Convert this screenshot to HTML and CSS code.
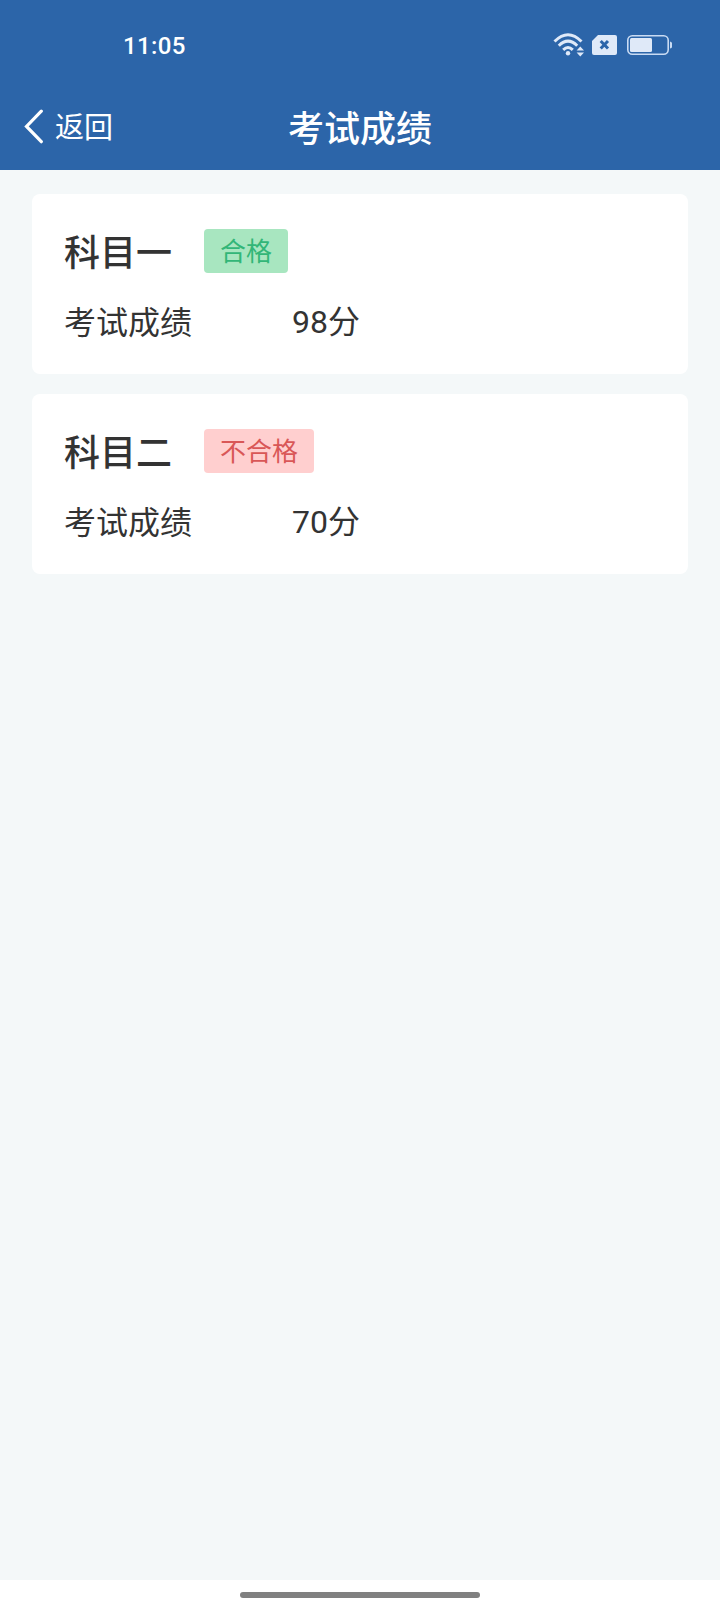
FILE: index.html
```html
<!DOCTYPE html>
<html lang="zh-CN">
<head>
<meta charset="utf-8">
<title>考试成绩</title>
<link rel="stylesheet" href="styles.css">
</head>
<body>
<header class="header">
  <div class="status">
    <span class="clock">11:05</span>
    <div class="status-icons">
      <svg width="32" height="26" viewBox="0 0 32 26" fill="none" stroke="#dfe9f8" stroke-width="3">
        <path d="M1.5 9.5Q15 -4 28.5 9.5M5.8 13.7Q15 4.6 24.2 13.7M10.2 17.8Q15 13.2 19.8 17.8"/>
        <circle cx="15" cy="21.3" r="2.2" fill="#dfe9f8" stroke="none"/>
        <path d="M27.3 14.5L31 18.5H23.6ZM27.3 24.5L31 20.5H23.6Z" fill="#dfe9f8" stroke="none"/>
      </svg>
      <svg class="sim" width="26" height="20" viewBox="0 0 26 20">
        <path d="M6 0H23Q25 0 25 2V18Q25 20 23 20H2Q0 20 0 18V6Z" fill="#dfe9f8"/>
        <path d="M8.7 6L16 13.5M16 6L8.7 13.5" stroke="#2c65a9" stroke-width="3"/>
      </svg>
      <svg class="battery" width="46" height="20" viewBox="0 0 46 20">
        <rect x=".8" y=".8" width="40.4" height="18.4" rx="4.5" fill="none" stroke="#c9dbf3" stroke-width="1.6"/>
        <rect x="3" y="3" width="22" height="14" rx="1.5" fill="#dfe9f8"/>
        <path d="M43 6.5Q45 7 45 8V12Q45 13 43 13.5Z" fill="#c9dbf3"/>
      </svg>
    </div>
  </div>
  <nav class="nav">
    <a class="back">
      <svg width="20" height="36" viewBox="0 0 20 36"><path d="M17.3 2.2L2.5 17.4L17.3 32.7" fill="none" stroke="#fff" stroke-width="3.2" stroke-linecap="round"/></svg>
      <span>返回</span>
    </a>
    <h1 class="title">考试成绩</h1>
  </nav>
</header>
<main class="content">
  <section class="card">
    <div class="card-head"><h2 class="subject">科目一</h2><span class="tag pass">合格</span></div>
    <div class="row"><span class="label">考试成绩</span><span class="value">98分</span></div>
  </section>
  <section class="card">
    <div class="card-head"><h2 class="subject">科目二</h2><span class="tag fail">不合格</span></div>
    <div class="row"><span class="label">考试成绩</span><span class="value">70分</span></div>
  </section>
</main>
<footer class="home"><div class="home-bar"></div></footer>
</body>
</html>
```
FILE: styles.css
```css
* { box-sizing: border-box; margin: 0; }
body {
  display: flex;
  flex-direction: column;
  height: 1612px;
  background: #f4f8f9;
  color: #333;
  font-family: Roboto, "Noto Sans CJK SC", sans-serif;
}
.header { height: 170px; background: #2c65a9; color: #fff; }
.status {
  display: flex;
  justify-content: space-between;
  height: 84px;
  padding: 32px 47px 0 123px;
}
.clock { font-size: 24px; font-weight: 500; line-height: 28px; letter-spacing: .4px; }
.status-icons { display: flex; height: 26px; }
.sim { margin: 3px 0 0 7px; }
.battery { margin: 3px 0 0 9px; }
.nav {
  display: grid;
  grid-template-columns: 1fr auto 1fr;
  align-items: center;
  height: 86px;
  padding: 0 24px;
}
.back { display: flex; align-items: center; font-size: 29px; line-height: 40px; }
.back span { margin-left: 11px; padding-top: 2px; }
.title { padding-top: 5px; font-size: 36px; font-weight: 500; line-height: 48px; }
.content { flex: 1; padding: 24px 32px; }
.card {
  height: 180px;
  margin-bottom: 20px;
  padding: 35px 32px 0;
  border-radius: 8px;
  background: #fff;
}
.card-head { display: flex; align-items: center; height: 44px; }
.subject { padding-top: 6px; font-size: 36px; font-weight: 500; line-height: 44px; }
.tag {
  height: 44px;
  margin-left: 32px;
  padding: 1px 16px 0;
  border-radius: 4px;
  font-size: 26px;
  line-height: 44px;
}
.pass { background: #a8e6c0; color: #32b678; }
.fail { background: #ffcfcf; color: #d95757; }
.row { display: flex; margin-top: 25px; font-size: 32px; line-height: 48px; }
.label { width: 228px; padding-top: 1px; }
.home { height: 32px; padding-top: 12px; background: #fff; }
.home-bar { width: 240px; height: 6px; margin: 0 auto; border-radius: 3px; background: #808080; }
```
